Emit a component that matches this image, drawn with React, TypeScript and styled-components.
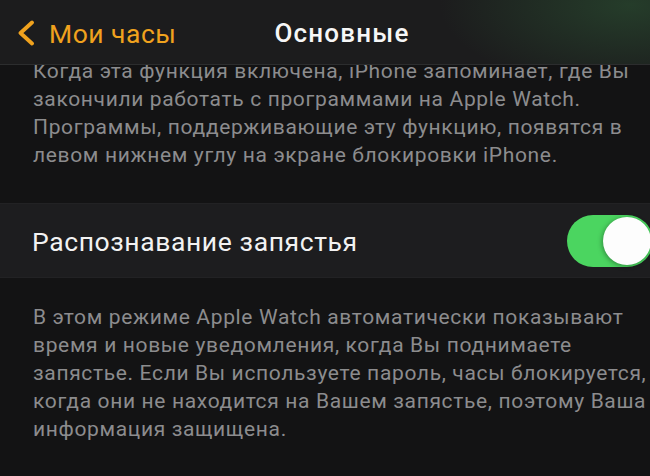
import styled, { createGlobalStyle } from 'styled-components';

const GlobalStyle = createGlobalStyle`
  html, body {
    margin: 0;
    padding: 0;
    background: #131314;
  }
  * {
    box-sizing: border-box;
  }
`;

const aboutLines = [
  'Когда эта функция включена, iPhone запоминает, где Вы',
  'закончили работать с программами на Apple Watch.',
  'Программы, поддерживающие эту функцию, появятся в',
  'левом нижнем углу на экране блокировки iPhone.',
];

const wristLines = [
  'В этом режиме Apple Watch автоматически показывают',
  'время и новые уведомления, когда Вы поднимаете',
  'запястье. Если Вы используете пароль, часы блокируется,',
  'когда они не находится на Вашем запястье, поэтому Ваша',
  'информация защищена.',
];

const Toggle = ({ on }: { on: boolean }) => (
  <Track $on={on}>
    <Knob />
  </Track>
);

const App = () => {
  return (
    <>
      <GlobalStyle />
      <Screen>
        <NavBar>
          <BackButton>
            <svg width="18" height="26" viewBox="0 0 18 26">
              <polyline
                points="15,2.5 3.5,13 15,23.5"
                fill="none"
                stroke="#f0a21e"
                strokeWidth="3.8"
                strokeLinecap="round"
                strokeLinejoin="round"
              />
            </svg>
            <span>Мои часы</span>
          </BackButton>
          <Title>Основные</Title>
        </NavBar>
        <Content>
          <Footnote $offset={-8}>
            {aboutLines.map((line) => (
              <Line key={line}>{line}</Line>
            ))}
          </Footnote>
          <SettingRow>
            <RowLabel>Распознавание запястья</RowLabel>
            <Toggle on />
          </SettingRow>
          <Footnote $offset={25}>
            {wristLines.map((line) => (
              <Line key={line}>{line}</Line>
            ))}
          </Footnote>
        </Content>
      </Screen>
    </>
  );
};

export default App;

/* Styles */

const Screen = styled.div`
  width: 650px;
  height: 476px;
  overflow: hidden;
  background: #131314;
  font-family: Roboto, 'Liberation Sans', sans-serif;
  display: flex;
  flex-direction: column;
`;

const NavBar = styled.div`
  flex: none;
  height: 65px;
  display: flex;
  align-items: center;
  background: radial-gradient(
      ellipse 190px 85px at 630px 5px,
      rgba(48, 100, 58, 0.45),
      rgba(48, 100, 58, 0) 100%
    ),
    #1c1c1d;
  border-bottom: 1px solid #2c2d2e;
`;

const BackButton = styled.div`
  display: flex;
  align-items: center;
  gap: 14px;
  padding-left: 17px;
  padding-top: 2px;
  color: #f0a21e;
  font-size: 26.5px;
  letter-spacing: 0.5px;
`;

const Title = styled.div`
  margin-left: 98px;
  color: #f6f6f6;
  font-size: 26px;
  font-weight: 500;
  letter-spacing: 1.2px;
  padding-top: 2px;
`;

const Content = styled.div`
  flex: 1;
  overflow: hidden;
`;

const Footnote = styled.div<{ $offset: number }>`
  margin-top: ${(p) => p.$offset}px;
  padding-left: 33px;
  color: #8c8c8e;
  font-size: 21px;
  letter-spacing: 0.65px;
  line-height: 28px;
  white-space: nowrap;
`;

const Line = styled.div``;

const SettingRow = styled.div`
  margin-top: 34px;
  height: 75px;
  display: flex;
  align-items: center;
  justify-content: space-between;
  padding-left: 32px;
  background: #1d1d1f;
  border-top: 1px solid #222224;
  border-bottom: 1px solid #222224;
`;

const RowLabel = styled.div`
  color: #f2f2f2;
  font-size: 26.5px;
  letter-spacing: 0.6px;
  padding-top: 2px;
`;

const Track = styled.div<{ $on: boolean }>`
  flex: none;
  width: 86px;
  height: 52px;
  margin-right: -3px;
  border-radius: 26px;
  padding: 2px;
  display: flex;
  justify-content: ${(p) => (p.$on ? 'flex-end' : 'flex-start')};
  background: ${(p) => (p.$on ? '#4bd560' : '#3a3a3c')};
`;

const Knob = styled.div`
  width: 48px;
  height: 48px;
  border-radius: 50%;
  background: #fdfdfd;
  box-shadow: -1px 1px 5px rgba(0, 0, 0, 0.35);
`;
